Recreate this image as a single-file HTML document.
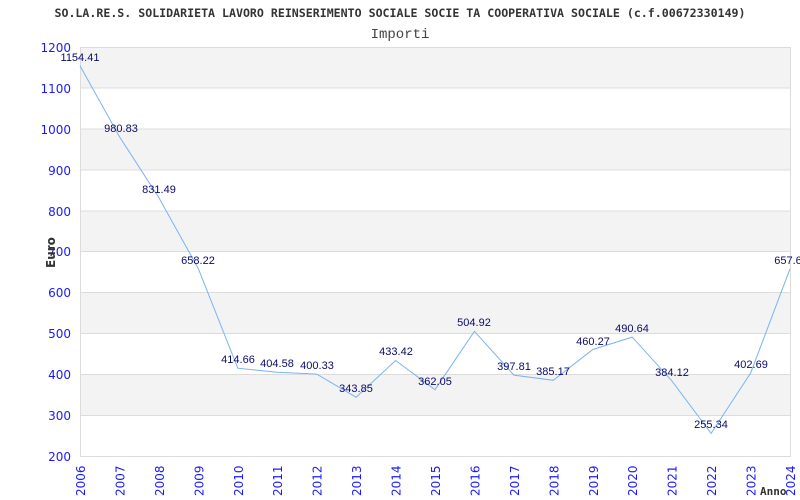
<!DOCTYPE html>
<html><head><meta charset="utf-8"><style>
html,body{margin:0;padding:0;background:#fff;width:800px;height:500px;overflow:hidden}
svg{display:block}
.yl{font-family:"DejaVu Sans","Liberation Sans",sans-serif;font-size:12px;fill:#1a1aff;text-anchor:end}
.xl{font-family:"DejaVu Sans","Liberation Sans",sans-serif;font-size:12px;fill:#1a1aff}
.vl{font-family:"Liberation Sans",sans-serif;font-size:11px;fill:#0a0a6a;text-anchor:middle}
</style></head><body>
<svg width="800" height="500" viewBox="0 0 800 500">
<text x="400" y="17" text-anchor="middle" font-family="'DejaVu Sans Mono','Liberation Mono',monospace" font-size="11.6" font-weight="bold" fill="#333">SO.LA.RE.S. SOLIDARIETA LAVORO REINSERIMENTO SOCIALE SOCIE TA COOPERATIVA SOCIALE (c.f.00672330149)</text>
<text x="400" y="38" text-anchor="middle" font-family="'Liberation Mono',monospace" font-size="14" fill="#444">Importi</text>
<g fill="#f3f3f3">
<rect x="80.5" y="47" width="709.5" height="40.9"/>
<rect x="80.5" y="128.8" width="709.5" height="40.9"/>
<rect x="80.5" y="210.6" width="709.5" height="40.9"/>
<rect x="80.5" y="292.4" width="709.5" height="40.9"/>
<rect x="80.5" y="374.2" width="709.5" height="40.9"/>
</g>
<g stroke="#dcdcdc" stroke-width="1">
<line x1="80" y1="47.5" x2="790" y2="47.5"/>
<line x1="80" y1="88" x2="790" y2="88"/>
<line x1="80" y1="129" x2="790" y2="129"/>
<line x1="80" y1="170" x2="790" y2="170"/>
<line x1="80" y1="211" x2="790" y2="211"/>
<line x1="80" y1="251.5" x2="790" y2="251.5"/>
<line x1="80" y1="292.5" x2="790" y2="292.5"/>
<line x1="80" y1="333.5" x2="790" y2="333.5"/>
<line x1="80" y1="374.5" x2="790" y2="374.5"/>
<line x1="80" y1="415.5" x2="790" y2="415.5"/>
<line x1="80" y1="456.5" x2="790.5" y2="456.5"/>
<line x1="80.5" y1="47" x2="80.5" y2="457"/>
<line x1="790.5" y1="47" x2="790.5" y2="457"/>
</g>
<g>
<text class="yl" x="71" y="52">1200</text>
<text class="yl" x="71" y="93">1100</text>
<text class="yl" x="71" y="134">1000</text>
<text class="yl" x="71" y="175">900</text>
<text class="yl" x="71" y="216">800</text>
<text class="yl" x="71" y="256">700</text>
<text class="yl" x="71" y="297">600</text>
<text class="yl" x="71" y="338">500</text>
<text class="yl" x="71" y="379">400</text>
<text class="yl" x="71" y="420">300</text>
<text class="yl" x="71" y="461">200</text>
</g>
<text transform="translate(55,268) rotate(-90)" font-family="'DejaVu Sans','Liberation Sans',sans-serif" font-size="12" font-weight="bold" fill="#333">Euro</text>
<g>
<text class="xl" transform="translate(85,496) rotate(-90)">2006</text>
<text class="xl" transform="translate(124.4,496) rotate(-90)">2007</text>
<text class="xl" transform="translate(163.9,496) rotate(-90)">2008</text>
<text class="xl" transform="translate(203.3,496) rotate(-90)">2009</text>
<text class="xl" transform="translate(242.8,496) rotate(-90)">2010</text>
<text class="xl" transform="translate(282.2,496) rotate(-90)">2011</text>
<text class="xl" transform="translate(321.7,496) rotate(-90)">2012</text>
<text class="xl" transform="translate(361.1,496) rotate(-90)">2013</text>
<text class="xl" transform="translate(400.6,496) rotate(-90)">2014</text>
<text class="xl" transform="translate(440,496) rotate(-90)">2015</text>
<text class="xl" transform="translate(479.4,496) rotate(-90)">2016</text>
<text class="xl" transform="translate(518.9,496) rotate(-90)">2017</text>
<text class="xl" transform="translate(558.3,496) rotate(-90)">2018</text>
<text class="xl" transform="translate(597.8,496) rotate(-90)">2019</text>
<text class="xl" transform="translate(637.2,496) rotate(-90)">2020</text>
<text class="xl" transform="translate(676.7,496) rotate(-90)">2021</text>
<text class="xl" transform="translate(716.1,496) rotate(-90)">2022</text>
<text class="xl" transform="translate(755.6,496) rotate(-90)">2023</text>
<text class="xl" transform="translate(795,496) rotate(-90)">2024</text>
</g>
<text x="760" y="495" font-family="'DejaVu Sans Mono','Liberation Mono',monospace" font-size="11" font-weight="bold" fill="#333">Anno</text>
<polyline fill="none" stroke="#7ab4f0" stroke-width="1" points="80,65.7 119.4,136.6 158.9,197.7 198.3,268.6 237.8,368.2 277.2,372.3 316.7,374.1 356.1,397.2 395.6,360.5 435,389.7 474.4,331.3 513.9,375.1 553.3,380.3 592.8,349.5 632.2,337.1 671.7,380.7 711.1,433.4 750.6,373.1 790,268.8"/>
<g>
<text class="vl" x="80" y="61">1154.41</text>
<text class="vl" x="121" y="132">980.83</text>
<text class="vl" x="159" y="193">831.49</text>
<text class="vl" x="198" y="264">658.22</text>
<text class="vl" x="238" y="363">414.66</text>
<text class="vl" x="277" y="367">404.58</text>
<text class="vl" x="317" y="369">400.33</text>
<text class="vl" x="356" y="392">343.85</text>
<text class="vl" x="396" y="355">433.42</text>
<text class="vl" x="435" y="385">362.05</text>
<text class="vl" x="474" y="326">504.92</text>
<text class="vl" x="514" y="370">397.81</text>
<text class="vl" x="553" y="375">385.17</text>
<text class="vl" x="593" y="345">460.27</text>
<text class="vl" x="632" y="332">490.64</text>
<text class="vl" x="672" y="376">384.12</text>
<text class="vl" x="711" y="428">255.34</text>
<text class="vl" x="751" y="368">402.69</text>
<text class="vl" x="788" y="264">657.6</text>
</g>
</svg>
</body></html>
